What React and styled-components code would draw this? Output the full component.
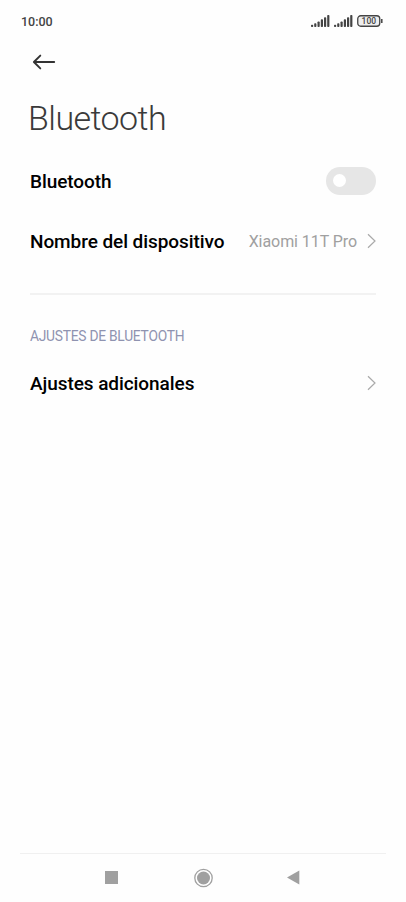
import React from "react";
import styled, { createGlobalStyle } from "styled-components";

const Global = createGlobalStyle`
  * { box-sizing: border-box; }
  body { margin: 0; background: #fff; font-family: Roboto, "Liberation Sans", sans-serif; }
`;
const Screen = styled.main`
  display: flex; flex-direction: column; width: 100%; height: 902px;
  background: #fefefe; overflow: hidden;
`;
const StatusBar = styled.header`
  display: flex; align-items: center; justify-content: space-between;
  height: 41px; padding: 0 23px 0 21px;
`;
const Clock = styled.span`
  padding-top: 1px; font-size: 12.5px; font-weight: 500; color: #444; letter-spacing: 0;
`;
const StatusIcons = styled.div`display: flex; align-items: center; gap: 4px;`;
const Toolbar = styled.div`display: flex; align-items: center; height: 41px; padding-left: 32px;`;
const IconButton = styled.button`
  display: flex; padding: 0; border: 0; background: none;
`;
const Title = styled.h1`
  margin: 15px 0 0 28px; font-size: 34px; line-height: 42px; font-weight: 300;
  letter-spacing: -0.55px; color: #3a3a3a;
`;
const Row = styled.div`
  display: flex; align-items: center; height: 60px; padding: 0 30px;
  margin-top: ${(p) => p.$top || 0}px;
`;
const Label = styled.span`
  flex: 1; font-size: 19px; font-weight: 500; letter-spacing: -0.07px; color: #000; white-space: nowrap;
`;
const Value = styled.span`
  font-size: 16px; letter-spacing: -0.07px; color: #a0a0a0; margin-right: 10px; white-space: nowrap;
`;
const Switch = styled.div`
  display: flex; align-items: center; width: 50px; height: 28px; padding: 0 0 1px 7px;
  border-radius: 14px; background: #e6e6e6;
`;
const Knob = styled.span`width: 13px; height: 13px; border-radius: 50%; background: #fff;`;
const Divider = styled.hr`
  width: calc(100% - 60px); height: 2px; margin: 22px 30px 0; border: 0; background: #f2f2f2;
`;
const Section = styled.h2`
  margin: 31px 0 0 30px; font-size: 13.8px; line-height: 20px; font-weight: 400;
  letter-spacing: -0.25px; color: #8f93b0;
`;
const NavBar = styled.nav`
  display: flex; justify-content: space-between; align-items: center;
  height: 49px; margin: auto 20px 0; padding: 0 86px 1px 85px; border-top: 1px solid #f0f0f0;
`;

const Bars = () => (
  <svg width="19" height="12" viewBox="0 0 19 12" fill="#444">
    <rect x="0" y="9.8" width="2.2" height="2.2" rx=".8" /><rect x="3.2" y="8.2" width="2.2" height="3.8" rx=".8" />
    <rect x="6.5" y="6.4" width="2.2" height="5.6" rx=".8" /><rect x="9.8" y="4.2" width="2.2" height="7.8" rx=".8" />
    <rect x="13" y="2.2" width="2.2" height="9.8" rx=".8" /><rect x="16.2" y="0" width="2.2" height="12" rx=".8" />
  </svg>
);
const Chevron = () => (
  <svg width="9" height="16" viewBox="0 0 9 16" fill="none" stroke="#aaa" strokeWidth="1.2"><path d="M1 1.2 8 8 1 14.8" /></svg>
);

export default function App() {
  return (
    <Screen>
      <Global />
      <StatusBar>
        <Clock>10:00</Clock>
        <StatusIcons>
          <Bars /><Bars />
          <svg width="26" height="12" viewBox="0 0 26 12">
            <rect x=".75" y=".75" width="22" height="10.5" rx="3" fill="#eee" stroke="#444" strokeWidth="1.3" />
            <path d="M24.8 4v4" stroke="#444" strokeWidth="1.5" />
            <text x="11.8" y="9.1" textAnchor="middle" fontSize="8.5" fontWeight="500" fill="#444">100</text>
          </svg>
        </StatusIcons>
      </StatusBar>
      <Toolbar>
        <IconButton aria-label="Atrás">
          <svg width="24" height="16" viewBox="0 0 24 16" fill="none" stroke="#333" strokeWidth="1.9" strokeLinejoin="round" strokeLinecap="round"><path d="M8.3 1.6 1.9 8l6.4 6.4M2 8h20.2" /></svg>
        </IconButton>
      </Toolbar>
      <Title>Bluetooth</Title>
      <Row $top={12}><Label>Bluetooth</Label><Switch role="switch" aria-checked="false"><Knob /></Switch></Row>
      <Row><Label>Nombre del dispositivo</Label><Value>Xiaomi 11T Pro</Value><Chevron /></Row>
      <Divider />
      <Section>AJUSTES DE BLUETOOTH</Section>
      <Row $top={7}><Label>Ajustes adicionales</Label><Chevron /></Row>
      <NavBar>
        <svg width="13" height="13"><rect width="13" height="13" fill="#a0a0a0" /></svg>
        <svg width="20" height="20"><circle cx="10.5" cy="10" r="8.7" fill="none" stroke="#a0a0a0" strokeWidth="1.3" /><circle cx="10.5" cy="10" r="6.5" fill="#a0a0a0" /></svg>
        <svg width="13" height="15"><path d="M0 7.5 12.3 .5v14Z" fill="#a0a0a0" /></svg>
      </NavBar>
    </Screen>
  );
}
